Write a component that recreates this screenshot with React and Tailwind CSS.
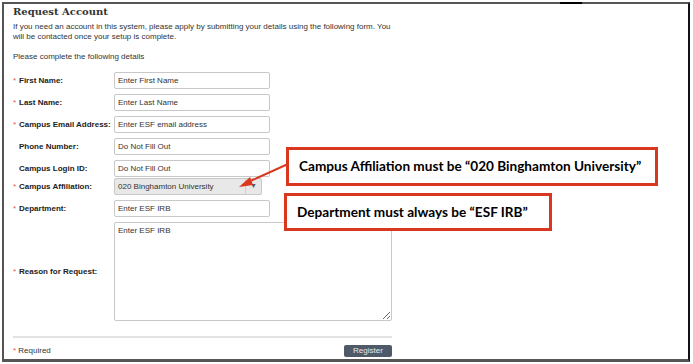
const fields = [
  { label: "First Name:", value: "Enter First Name", required: true },
  { label: "Last Name:", value: "Enter Last Name", required: true },
  { label: "Campus Email Address:", value: "Enter ESF email address", required: true },
  { label: "Phone Number:", value: "Do Not Fill Out" },
  { label: "Campus Login ID:", value: "Do Not Fill Out" },
];

function Label({ text, required }) {
  return (
    <div className="w-[101px] shrink-0 flex items-center whitespace-nowrap text-[8px] font-bold text-[#222]">
      <span className="w-[6px] text-[#e05555] font-normal">{required ? "*" : ""}</span>
      <span>{text}</span>
    </div>
  );
}

function Row({ label, required, children }) {
  return (
    <div className="flex items-center mb-[5px]">
      <Label text={label} required={required} />
      {children}
    </div>
  );
}

function TextBox({ value }) {
  return (
    <input
      readOnly
      defaultValue={value}
      className="w-[156px] h-[17px] border border-[#c8c8c8] rounded-[2px] bg-white px-[3px] text-[8px] text-[#333] outline-none"
    />
  );
}

function Callout({ className, children }) {
  return (
    <div
      className={`absolute border-[3px] border-[#d9381e] bg-white flex items-center pl-[10px] whitespace-nowrap font-['Lato',sans-serif] font-bold text-[13.6px] text-black ${className}`}
    >
      {children}
    </div>
  );
}

export default function App() {
  return (
    <div className="relative w-[693px] h-[364px] bg-white overflow-hidden font-['Liberation_Sans',Arial,sans-serif]">
      <div className="absolute left-[2px] top-[2px] w-[688px] h-[360px] border-l-2 border-t-2 border-b-[3px] border-r-2 border-l-[#555] border-t-[#555] border-b-[#555] border-r-[#111] pl-[9px] pt-[1px]">
        <h1 className="font-['DejaVu_Serif',serif] font-bold text-[10px] leading-[14px] text-[#333]">
          Request Account
        </h1>
        <p className="mt-[3px] text-[8px] leading-[10px] text-[#333] w-[378px]">
          If you need an account in this system, please apply by submitting your details using the following form. You will be contacted once your setup is complete.
        </p>
        <p className="mt-[10px] text-[8px] leading-[10px] text-[#333]">
          Please complete the following details
        </p>
        <div className="mt-[10px]">
          {fields.map((f) => (
            <Row key={f.label} label={f.label} required={f.required}>
              <TextBox value={f.value} />
            </Row>
          ))}
          <div className="flex items-center -mt-[4px] mb-[5px]">
            <Label text="Campus Affiliation:" required />
            <div className="w-[148px] h-[17px] border border-[#c8c8c8] rounded-[2px] bg-[#e8e8e8] flex items-center text-[8px] text-[#333]">
              <span className="flex-1 pl-[3px]">020 Binghamton University</span>
              <span className="w-[16px] h-full border-l border-[#d0d0d0] flex items-center justify-center text-[7px] text-[#556]">
                ▼
              </span>
            </div>
          </div>
          <Row label="Department:" required>
            <TextBox value="Enter ESF IRB" />
          </Row>
          <Row label="Reason for Request:" required>
            <textarea
              readOnly
              defaultValue="Enter ESF IRB"
              className="w-[278px] h-[99px] border border-[#c8c8c8] rounded-[2px] bg-white px-[3px] py-[2px] text-[8px] text-[#333] outline-none"
            />
          </Row>
        </div>
        <div className="mt-[15px] w-[379px] h-[2px] bg-[#e2e2e2]" />
        <div className="mt-[7px] w-[379px] flex items-center justify-between">
          <div className="text-[8px] text-[#333]">
            <span className="text-[#e05555]">* </span>Required
          </div>
          <button className="w-[48px] h-[12px] bg-[#4f5a68] rounded-[2px] text-[8px] leading-[12px] text-[#e8e8e8]">
            Register
          </button>
        </div>
      </div>

      <div className="absolute left-[560px] top-[2px] w-[22px] h-[2px] bg-black" />

      <svg className="absolute left-0 top-0" width="693" height="364">
        <line x1="288" y1="164" x2="246" y2="183" stroke="#d9381e" strokeWidth="2" />
        <polygon points="239,187 250,177 253,185" fill="#d9381e" />
      </svg>

      <Callout className="left-[286px] top-[147px] w-[372px] h-[39px]">
        Campus Affiliation must be “020 Binghamton University”
      </Callout>
      <Callout className="left-[284px] top-[193px] w-[268px] h-[38px]">
        Department must always be “ESF IRB”
      </Callout>
    </div>
  );
}
